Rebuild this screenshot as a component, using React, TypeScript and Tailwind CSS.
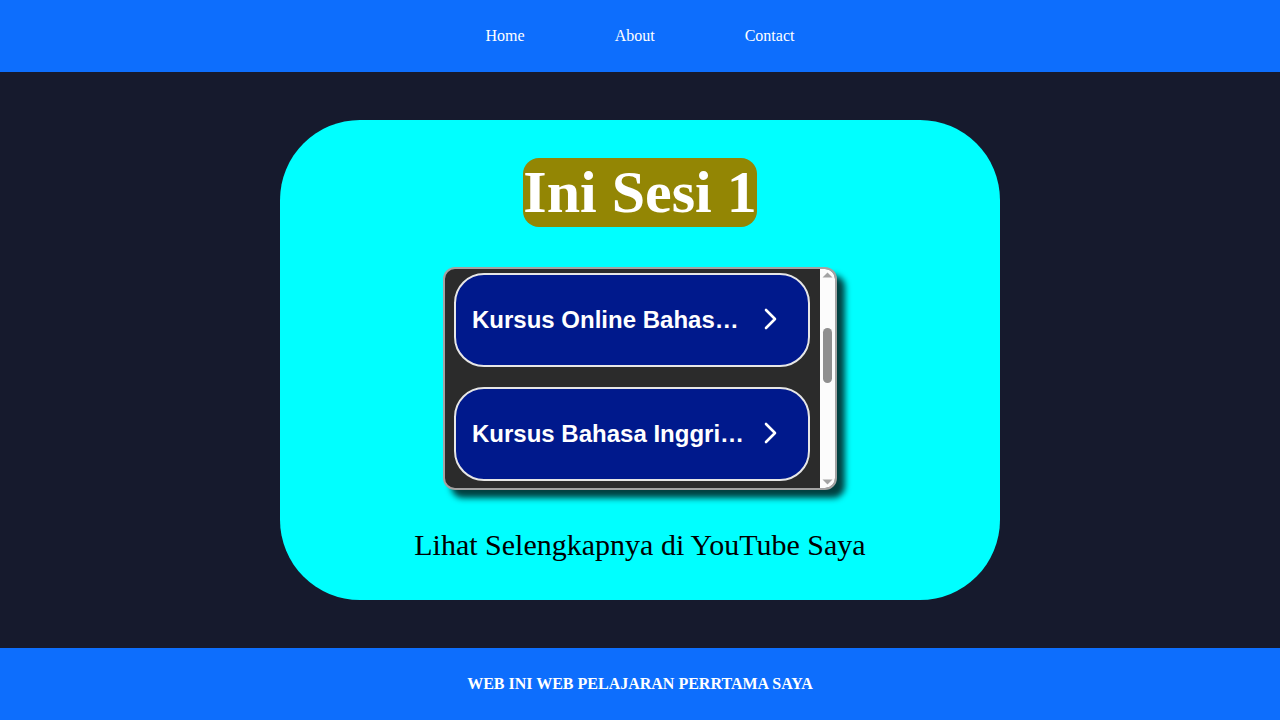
import { useEffect, useRef } from "react";

const courses = [
  "Kursus Bahasa Jepang Dasar",
  "Kursus Bahasa Korea Pemula",
  "Kursus Online Bahasa Inggris",
  "Kursus Bahasa Inggris Gratis",
  "Kursus Bahasa Arab Online",
  "Kursus Bahasa Mandarin",
  "Kursus Bahasa Jerman",
];

function Chevron() {
  return (
    <svg width="14" height="22" viewBox="0 0 14 22" className="shrink-0 -mt-0.5">
      <polyline
        points="2,2 11,11 2,20"
        fill="none"
        stroke="white"
        strokeWidth="2.6"
        strokeLinecap="round"
        strokeLinejoin="round"
      />
    </svg>
  );
}

// classic scrollbar look
function ScrollBar() {
  return (
    <div className="w-[15px] shrink-0 bg-[#fcfcfc] flex flex-col items-center">
      <svg width="15" height="14" viewBox="0 0 15 14" className="shrink-0">
        <polygon points="2.5,8.5 7.5,3.5 12.5,8.5" fill="#a3a3a3" />
      </svg>
      <div className="flex-1 w-full px-[3px] pt-[45px]">
        <div className="h-[55px] rounded-full bg-[#8f8f8f]" />
      </div>
      <svg width="15" height="14" viewBox="0 0 15 14" className="shrink-0">
        <polygon points="2.5,5.5 7.5,10.5 12.5,5.5" fill="#a3a3a3" />
      </svg>
    </div>
  );
}

export default function App() {
  const listRef = useRef<HTMLDivElement>(null);

  useEffect(() => {
    if (listRef.current) listRef.current.scrollTop = 228;
  }, []);

  return (
    <div className="min-h-screen flex flex-col bg-[#161a2d]">
      {/* Header */}
      <header className="h-[72px] bg-[#0d6efd] flex items-center justify-center">
        <ul className="flex items-center gap-[90px] text-white text-base font-['Liberation_Serif',serif]">
          <li><a href="#">Home</a></li>
          <li><a href="#">About</a></li>
          <li><a href="#">Contact</a></li>
        </ul>
      </header>

      {/* Main */}
      <main className="flex-1 flex justify-center py-12">
        <div className="w-[720px] h-[480px] bg-[#00ffff] rounded-[80px] flex flex-col items-center pt-[38px]">
          <h1 className="bg-[#938604] text-white rounded-2xl text-[60px] leading-[69px] font-bold font-['Liberation_Serif',serif]">
            Ini Sesi 1
          </h1>

          <div className="mt-10 w-[394px] h-[223px] flex bg-[#2b2b2b] border-2 border-[#a3a3a3] rounded-xl overflow-hidden shadow-[8px_8px_6px_rgba(0,0,0,0.75)]">
            <div ref={listRef} className="flex-1 overflow-hidden pl-[9px] pr-[10px] py-1">
              <div className="flex flex-col gap-5">
                {courses.map((c) => (
                  <div
                    key={c}
                    className="h-[94px] shrink-0 border-2 border-[#e6e6e6] rounded-[30px] bg-[#00198c] flex items-center pl-4 gap-4"
                  >
                    <span className="w-[276px] truncate text-white text-2xl font-bold font-['Liberation_Sans',Arial,sans-serif]">
                      {c}
                    </span>
                    <Chevron />
                  </div>
                ))}
              </div>
            </div>
            <ScrollBar />
          </div>

          <p className="mt-8 text-[30px] text-black font-['Liberation_Serif',serif]">
            Lihat Selengkapnya di YouTube Saya
          </p>
        </div>
      </main>

      {/* Footer */}
      <footer className="h-[72px] bg-[#0d6efd] flex items-center justify-center">
        <p className="text-white font-bold text-base font-['Liberation_Serif',serif]">
          WEB INI WEB PELAJARAN PERRTAMA SAYA
        </p>
      </footer>
    </div>
  );
}
